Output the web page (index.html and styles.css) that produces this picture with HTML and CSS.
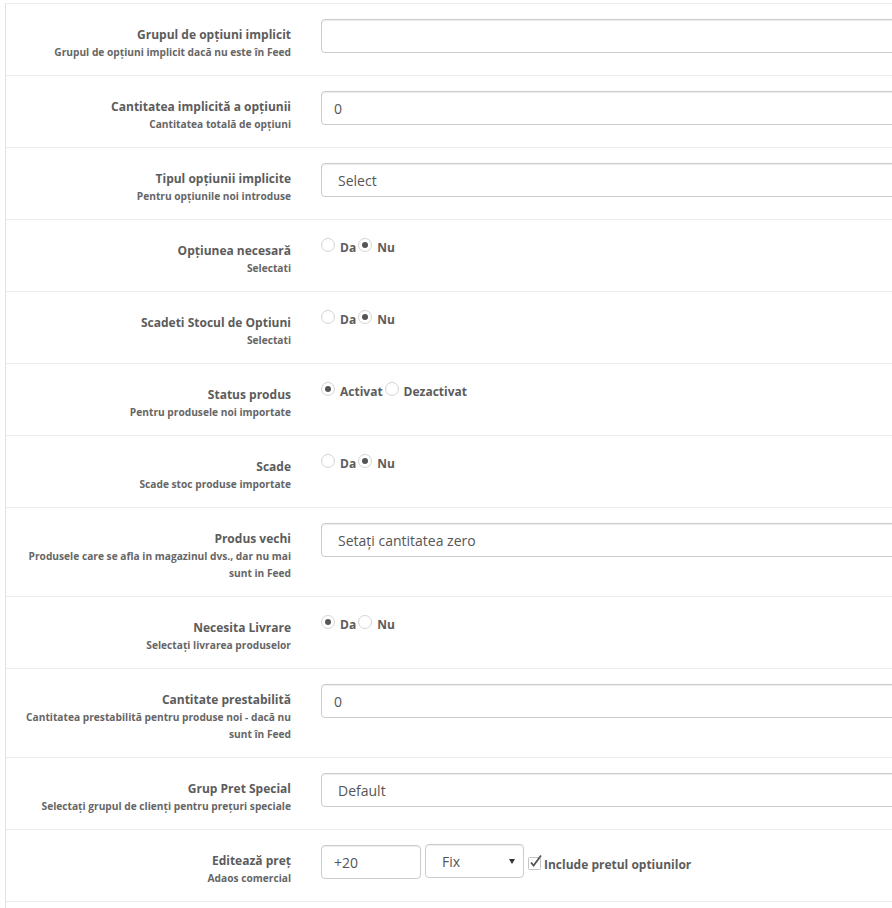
FILE: index.html
```html
<!DOCTYPE html>
<html lang="ro">
<head>
<meta charset="utf-8">
<title>Setări import</title>
<link rel="stylesheet" href="styles.css">
</head>
<body>
<div class="page">
  <div class="form">
    <div class="row">
      <div class="label"><div class="title">Grupul de opţiuni implicit</div><div class="help">Grupul de opţiuni implicit dacă nu este în Feed</div></div>
      <div class="control"><input class="field" type="text" value=""></div>
    </div>
    <div class="row">
      <div class="label"><div class="title">Cantitatea implicită a opţiunii</div><div class="help">Cantitatea totală de opţiuni</div></div>
      <div class="control"><input class="field" type="text" value="0"></div>
    </div>
    <div class="row">
      <div class="label"><div class="title">Tipul opţiunii implicite</div><div class="help">Pentru opţiunile noi introduse</div></div>
      <div class="control"><select class="field sel"><option>Select</option></select></div>
    </div>
    <div class="row">
      <div class="label"><div class="title">Opţiunea necesară</div><div class="help">Selectati</div></div>
      <div class="control radios">
        <label class="radio"><input type="radio" name="r1"><span>Da</span></label>
        <label class="radio"><input type="radio" name="r1" checked><span>Nu</span></label>
      </div>
    </div>
    <div class="row">
      <div class="label"><div class="title">Scadeti Stocul de Optiuni</div><div class="help">Selectati</div></div>
      <div class="control radios">
        <label class="radio"><input type="radio" name="r2"><span>Da</span></label>
        <label class="radio"><input type="radio" name="r2" checked><span>Nu</span></label>
      </div>
    </div>
    <div class="row">
      <div class="label"><div class="title">Status produs</div><div class="help">Pentru produsele noi importate</div></div>
      <div class="control radios">
        <label class="radio"><input type="radio" name="r3" checked><span>Activat</span></label>
        <label class="radio"><input type="radio" name="r3"><span>Dezactivat</span></label>
      </div>
    </div>
    <div class="row">
      <div class="label"><div class="title">Scade</div><div class="help">Scade stoc produse importate</div></div>
      <div class="control radios">
        <label class="radio"><input type="radio" name="r4"><span>Da</span></label>
        <label class="radio"><input type="radio" name="r4" checked><span>Nu</span></label>
      </div>
    </div>
    <div class="row">
      <div class="label"><div class="title">Produs vechi</div><div class="help">Produsele care se afla in magazinul dvs., dar nu mai sunt in Feed</div></div>
      <div class="control"><select class="field sel"><option>Setaţi cantitatea zero</option></select></div>
    </div>
    <div class="row">
      <div class="label"><div class="title">Necesita Livrare</div><div class="help">Selectaţi livrarea produselor</div></div>
      <div class="control radios">
        <label class="radio"><input type="radio" name="r5" checked><span>Da</span></label>
        <label class="radio"><input type="radio" name="r5"><span>Nu</span></label>
      </div>
    </div>
    <div class="row">
      <div class="label"><div class="title">Cantitate prestabilită</div><div class="help">Cantitatea prestabilită pentru produse noi - dacă nu sunt în Feed</div></div>
      <div class="control"><input class="field" type="text" value="0"></div>
    </div>
    <div class="row">
      <div class="label"><div class="title">Grup Pret Special</div><div class="help">Selectaţi grupul de clienţi pentru preţuri speciale</div></div>
      <div class="control"><select class="field sel"><option>Default</option></select></div>
    </div>
    <div class="row">
      <div class="label"><div class="title">Editează preţ</div><div class="help">Adaos comercial</div></div>
      <div class="control inline">
        <input class="field small" type="text" value="+20">
        <span class="sel-wrap"><select class="field sel small"><option>Fix</option></select></span>
        <label class="check">
          <svg class="checkbox" width="15" height="16" viewBox="0 0 15 16" aria-hidden="true">
            <rect x="0.5" y="3.5" width="12" height="12" rx="1" fill="#fff" stroke="#c4c4c4"/>
            <path d="M3 8.5 L5.6 11.6 L13 1.5" fill="none" stroke="#555" stroke-width="1.8"/>
          </svg>
          <span>Include pretul optiunilor</span>
        </label>
      </div>
    </div>
  </div>
</div>
</body>
</html>
```
FILE: styles.css
```css
html, body {
  margin: 0;
  padding: 0;
  background: #fff;
}

.page {
  width: 892px;
  height: 908px;
  overflow: hidden;
  padding-left: 5px;
  padding-top: 3px;
  box-sizing: border-box;
}

.form {
  width: 1200px;
  border-left: 1px solid #e2e2e2;
  border-top: 1px solid #ececec;
  min-height: 920px;
  font-family: "Open Sans", "DejaVu Sans", sans-serif;
  color: #666;
}

.row {
  display: grid;
  grid-template-columns: 300px 1fr;
  padding: 15px 0 14px;
  border-bottom: 1px solid #ececec;
}

.label {
  text-align: right;
  padding: 7px 15px 0 15px;
}

.title {
  font-size: 12px;
  font-weight: 700;
  line-height: 18px;
  color: #5c5c5c;
}

.help {
  font-size: 10.2px;
  font-weight: 700;
  line-height: 17px;
  color: #666;
}

.control {
  padding: 0 15px;
}

.field {
  display: block;
  box-sizing: border-box;
  width: 100%;
  height: 34px;
  margin: 0;
  padding: 6px 12px;
  font-family: "Open Sans", "DejaVu Sans", sans-serif;
  font-size: 14px;
  color: #555;
  background: #fff;
  border: 1px solid #ccc;
  border-radius: 4px;
  box-shadow: inset 0 1px 1px rgba(0, 0, 0, 0.075);
  outline: none;
}

.sel {
  -webkit-appearance: none;
  appearance: none;
  padding-left: 16px;
}

.radios {
  display: flex;
  align-items: flex-start;
  gap: 2px;
  padding-top: 4px;
}

.radio {
  display: inline-flex;
  align-items: flex-start;
  gap: 5px;
  font-size: 12px;
  font-weight: 700;
  line-height: 17px;
  color: #5c5c5c;
}

.radio input {
  -webkit-appearance: none;
  appearance: none;
  width: 14px;
  height: 14px;
  margin: -1px 0 0 0;
  border: 1px solid #d4d4d4;
  border-radius: 50%;
  background: #fff;
  box-sizing: border-box;
  position: relative;
}

.radio input:checked::after {
  content: "";
  position: absolute;
  left: 3px;
  top: 2.5px;
  width: 6px;
  height: 6px;
  border-radius: 50%;
  background: #555;
}

.inline {
  display: flex;
  align-items: flex-start;
  gap: 4px;
}

.field.small {
  width: 100px;
}

.sel-wrap {
  position: relative;
  display: block;
  margin-top: -1px;
}

.sel-wrap .field.small {
  width: 99px;
}

.sel-wrap::after {
  content: "";
  position: absolute;
  right: 9px;
  top: 15px;
  border-left: 3px solid transparent;
  border-right: 3px solid transparent;
  border-top: 5px solid #333;
}

.check {
  display: inline-flex;
  align-items: flex-start;
  gap: 1px;
  margin-top: 9px;
  font-size: 12px;
  font-weight: 700;
  line-height: 17px;
  color: #5c5c5c;
}

.check span {
  margin-top: 2px;
}

.checkbox {
  flex: none;
}
```
